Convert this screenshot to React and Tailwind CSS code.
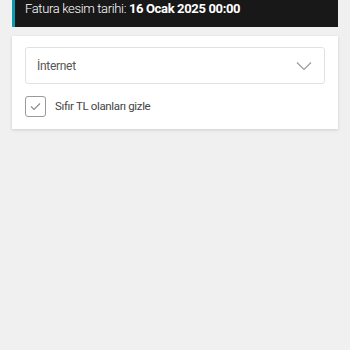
export default function App() {
  return (
    <div className="min-h-[350px] w-[350px] bg-[#f0f0f0] px-3" style={{ fontFamily: 'Roboto, "Open Sans", sans-serif' }}>
      <div className="flex h-[27px] items-start border-l-[3px] border-[#0a9bb0] bg-[#181818] pl-[10px] pt-0">
        <span className="text-[13px] font-light leading-[17px] tracking-[-0.35px] text-white">
          Fatura kesim tarihi: <span className="font-bold">16 Ocak 2025 00:00</span>
        </span>
      </div>
      <div className="mt-[9px] bg-white px-[13px] pb-[12px] pt-[11px] shadow-[0_1px_3px_rgba(0,0,0,0.15)]">
        <div className="flex h-[37px] items-center justify-between rounded-[3px] border border-[#e2e2e2] pl-[11px] pr-[12px]">
          <span className="text-[12px] tracking-[-0.3px] text-[#555]">İnternet</span>
          <svg width="16" height="10" viewBox="0 0 16 10" fill="none">
            <path d="M1 1.5 L8 8.5 L15 1.5" stroke="#9a9a9a" strokeWidth="1.2" />
          </svg>
        </div>
        <div className="mt-[12px] flex items-center gap-[9px]">
          <div className="flex h-[21px] w-[21px] items-center justify-center rounded-[3px] border border-[#9a9a9a]">
            <svg width="11" height="9" viewBox="0 0 11 9" fill="none">
              <path d="M1 4.5 L4 7.5 L10 1.5" stroke="#8a8a8a" strokeWidth="1.1" />
            </svg>
          </div>
          <span className="text-[11.5px] tracking-[-0.35px] text-[#444]">Sıfır TL olanları gizle</span>
        </div>
      </div>
    </div>
  );
}
